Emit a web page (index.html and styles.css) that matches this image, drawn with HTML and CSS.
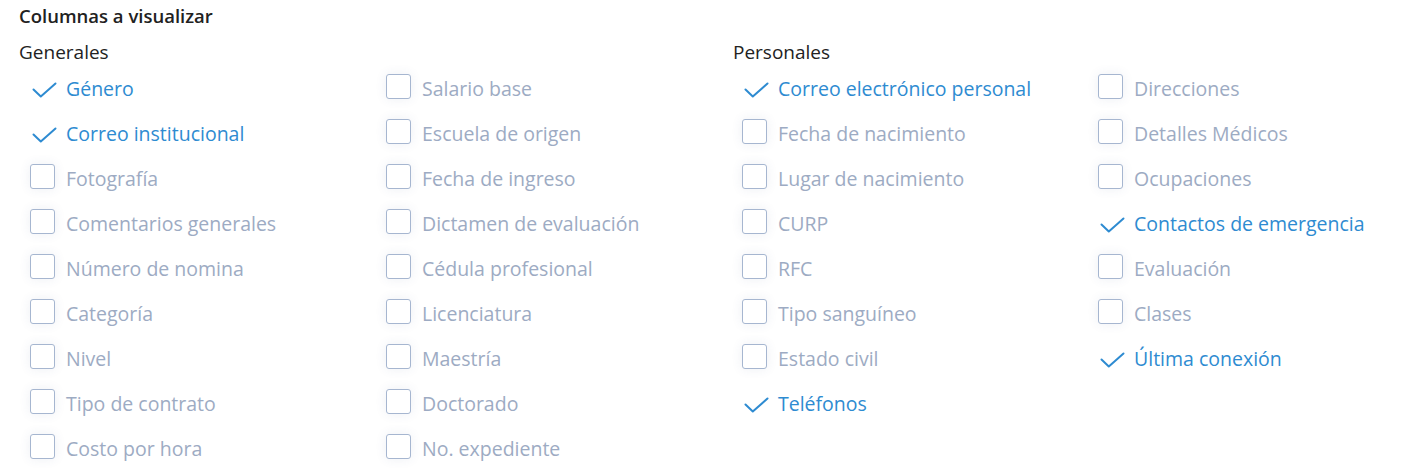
FILE: index.html
```html
<!DOCTYPE html>
<html lang="es">
<head>
<meta charset="utf-8">
<title>Columnas a visualizar</title>
<link rel="stylesheet" href="styles.css">
</head>
<body>
<div class="panel">
  <h2 class="title">Columnas a visualizar</h2>
  <div class="sections">
    <section class="section">
      <h3 class="section-title">Generales</h3>
      <div class="columns">
        <ul class="col">
          <li class="opt checked"><span class="box"><svg viewBox="0 0 26 26"><path d="M3.5 15.5 L10.8 22.5 L25.5 9.5"/></svg></span><span class="label">Género</span></li>
          <li class="opt checked"><span class="box"><svg viewBox="0 0 26 26"><path d="M3.5 15.5 L10.8 22.5 L25.5 9.5"/></svg></span><span class="label">Correo institucional</span></li>
          <li class="opt"><span class="box"></span><span class="label">Fotografía</span></li>
          <li class="opt"><span class="box"></span><span class="label">Comentarios generales</span></li>
          <li class="opt"><span class="box"></span><span class="label">Número de nomina</span></li>
          <li class="opt"><span class="box"></span><span class="label">Categoría</span></li>
          <li class="opt"><span class="box"></span><span class="label">Nivel</span></li>
          <li class="opt"><span class="box"></span><span class="label">Tipo de contrato</span></li>
          <li class="opt"><span class="box"></span><span class="label">Costo por hora</span></li>
        </ul>
        <ul class="col">
          <li class="opt"><span class="box"></span><span class="label">Salario base</span></li>
          <li class="opt"><span class="box"></span><span class="label">Escuela de origen</span></li>
          <li class="opt"><span class="box"></span><span class="label">Fecha de ingreso</span></li>
          <li class="opt"><span class="box"></span><span class="label">Dictamen de evaluación</span></li>
          <li class="opt"><span class="box"></span><span class="label">Cédula profesional</span></li>
          <li class="opt"><span class="box"></span><span class="label">Licenciatura</span></li>
          <li class="opt"><span class="box"></span><span class="label">Maestría</span></li>
          <li class="opt"><span class="box"></span><span class="label">Doctorado</span></li>
          <li class="opt"><span class="box"></span><span class="label">No. expediente</span></li>
        </ul>
      </div>
    </section>
    <section class="section section-personal">
      <h3 class="section-title">Personales</h3>
      <div class="columns">
        <ul class="col">
          <li class="opt checked"><span class="box"><svg viewBox="0 0 26 26"><path d="M3.5 15.5 L10.8 22.5 L25.5 9.5"/></svg></span><span class="label">Correo electrónico personal</span></li>
          <li class="opt"><span class="box"></span><span class="label">Fecha de nacimiento</span></li>
          <li class="opt"><span class="box"></span><span class="label">Lugar de nacimiento</span></li>
          <li class="opt"><span class="box"></span><span class="label">CURP</span></li>
          <li class="opt"><span class="box"></span><span class="label">RFC</span></li>
          <li class="opt"><span class="box"></span><span class="label">Tipo sanguíneo</span></li>
          <li class="opt"><span class="box"></span><span class="label">Estado civil</span></li>
          <li class="opt checked"><span class="box"><svg viewBox="0 0 26 26"><path d="M3.5 15.5 L10.8 22.5 L25.5 9.5"/></svg></span><span class="label">Teléfonos</span></li>
        </ul>
        <ul class="col">
          <li class="opt"><span class="box"></span><span class="label">Direcciones</span></li>
          <li class="opt"><span class="box"></span><span class="label">Detalles Médicos</span></li>
          <li class="opt"><span class="box"></span><span class="label">Ocupaciones</span></li>
          <li class="opt checked"><span class="box"><svg viewBox="0 0 26 26"><path d="M3.5 15.5 L10.8 22.5 L25.5 9.5"/></svg></span><span class="label">Contactos de emergencia</span></li>
          <li class="opt"><span class="box"></span><span class="label">Evaluación</span></li>
          <li class="opt"><span class="box"></span><span class="label">Clases</span></li>
          <li class="opt checked"><span class="box"><svg viewBox="0 0 26 26"><path d="M3.5 15.5 L10.8 22.5 L25.5 9.5"/></svg></span><span class="label">Última conexión</span></li>
        </ul>
      </div>
    </section>
  </div>
</div>
</body>
</html>
```

FILE: styles.css
```css
* { box-sizing: border-box; }
html, body {
  margin: 0;
  background: #ffffff;
}
body {
  font-family: "Open Sans", "Noto Sans", sans-serif;
  color: #212529;
}
.panel {
  padding: 4px 0 0 19px;
}
.title {
  margin: 0;
  font-size: 18.5px;
  line-height: 24px;
  font-weight: 600;
  color: #212121;
}
.sections {
  display: grid;
  grid-template-columns: 712px 1fr;
  margin-top: 12px;
}
.section-title {
  margin: 0 0 2px 0;
  font-size: 19px;
  line-height: 24px;
  font-weight: 400;
  color: #222222;
}
.section-personal .section-title {
  padding-left: 2px;
}
.columns {
  display: grid;
  grid-template-columns: 356px 356px;
  padding-left: 11px;
}
.col {
  list-style: none;
  margin: 0;
  padding: 0;
}
.opt {
  height: 45px;
  display: flex;
  align-items: center;
  gap: 11px;
}
.box {
  position: relative;
  flex: none;
  width: 25px;
  height: 25px;
  margin-top: -5px;
  border: 1px solid #a6b6d0;
  border-radius: 3px;
  background: #ffffff;
  box-shadow: 0 0 12px rgba(60, 80, 130, 0.09);
}
.opt.checked .box {
  border-color: transparent;
  background: transparent;
  box-shadow: none;
}
.box svg {
  position: absolute;
  left: -1px;
  top: -1px;
  width: 26px;
  height: 26px;
  overflow: visible;
}
.box svg path {
  fill: none;
  stroke: #2e8bd1;
  stroke-width: 2;
  stroke-linecap: round;
  stroke-linejoin: round;
}
.label {
  font-size: 19.5px;
  line-height: 24px;
  color: #9dabc3;
  white-space: nowrap;
}
.opt.checked .label {
  color: #2e8bd1;
}
```
